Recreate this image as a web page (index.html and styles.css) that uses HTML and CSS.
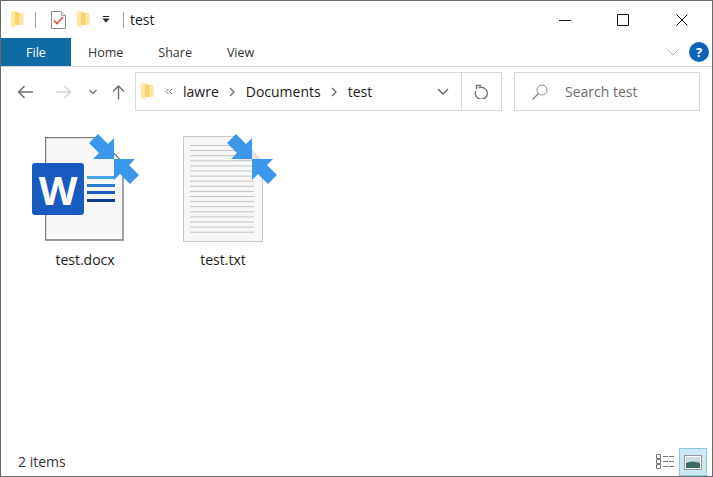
FILE: index.html
```html
<!DOCTYPE html>
<html lang="en">
<head>
<meta charset="utf-8">
<title>test</title>
<link rel="stylesheet" href="styles.css">
</head>
<body>
<svg class="defs" width="0" height="0" aria-hidden="true">
  <defs>
    <symbol id="folder" viewBox="0 0 13 17">
      <path d="M0 0 L6 .5 L7 2 H12.500 V14 H4 L4 16.500 L0 15 Z" fill="#fbe7a6"/>
      <path d="M0 0 L4 .3 V16.500 L0 15 Z" fill="#fde99f"/>
      <path d="M4 1 L8.500 2 V14 H4 Z" fill="#f6d36c"/>
    </symbol>
    <symbol id="compress" viewBox="0 0 50 50">
      <path d="M25 25 H4 L10 19 L0 9 L9 0 L19 10 L25 4 Z" fill="#3b97ea"/>
      <path d="M25 25 H46 L40 31 L50 41 L41 50 L31 40 L25 46 Z" fill="#3b97ea"/>
    </symbol>
  </defs>
</svg>
<div class="window">
  <header class="titlebar">
    <svg class="qa-folder"><use href="#folder"/></svg>
    <span class="qa-sep"></span>
    <svg class="qa-check" viewBox="0 0 15 18">
      <path d="M.5.5 H10.500 L14.500 4.500 V17.500 H.5 Z" fill="#fdfdfd" stroke="#8a8a8a"/>
      <path d="M10.500.5 V4.500 H14.500" fill="#e8e8e8" stroke="#a8a8a8"/>
      <path d="M3 9.500 L6 12.500 L12 6" fill="none" stroke="#e2542c" stroke-width="1.600"/>
    </svg>
    <svg class="qa-folder2"><use href="#folder"/></svg>
    <svg class="qa-more" viewBox="0 0 8 7">
      <path d="M1 .5 H7" stroke="#222" fill="none"/>
      <path d="M.5 2.500 H7.500 L4 6.500 Z" fill="#222"/>
    </svg>
    <span class="qa-sep2"></span>
    <span class="title">test</span>
    <div class="winbtns">
      <svg class="winbtn winbtn-min" viewBox="0 0 12 12"><path d="M0 6.500 H12" stroke="#111" fill="none"/></svg>
      <svg class="winbtn" viewBox="0 0 12 12"><path d="M.5.5 H11.500 V11.500 H.5 Z" stroke="#111" fill="none"/></svg>
      <svg class="winbtn" viewBox="0 0 12 12"><path d="M.5.5 L11.500 11.500 M11.500.5 L.5 11.500" stroke="#111" fill="none"/></svg>
    </div>
  </header>
  <nav class="tabs">
    <span class="tab-file">File</span>
    <span class="tab tab-home">Home</span>
    <span class="tab tab-share">Share</span>
    <span class="tab tab-view">View</span>
    <svg class="ribbon-toggle" viewBox="0 0 14 8"><path d="M1 1 L7 7 L13 1" stroke="#b5b5b5" fill="none"/></svg>
    <span class="help">?</span>
  </nav>
  <div class="navrow">
    <svg class="nav-back" viewBox="0 0 16 14"><path d="M16 7 H1.500 M7.500 1 L1.500 7 L7.500 13" stroke="#6e6e6e" stroke-width="1.500" fill="none"/></svg>
    <svg class="nav-forward" viewBox="0 0 16 14"><path d="M0 7 H14.500 M8.500 1 L14.500 7 L8.500 13" stroke="#d4d4d4" stroke-width="1.500" fill="none"/></svg>
    <svg class="nav-recent" viewBox="0 0 8 6"><path d="M.5 1 L4 4.500 L7.500 1" stroke="#777" stroke-width="1.400" fill="none"/></svg>
    <svg class="nav-up" viewBox="0 0 14 16"><path d="M7 16 V1.500 M1 7.500 L7 1.500 L13 7.500" stroke="#6e6e6e" stroke-width="1.500" fill="none"/></svg>
    <div class="address">
      <svg class="addr-folder"><use href="#folder"/></svg>
      <svg class="addr-chev2" viewBox="0 0 8 7"><path d="M3.500 1 L1 3.500 L3.500 6 M7 1 L4.500 3.500 L7 6" stroke="#777" fill="none"/></svg>
      <span class="crumb crumb-lawre">lawre</span>
      <svg class="addr-chev" viewBox="0 0 6 10"><path d="M1 1 L5 5 L1 9" stroke="#666" stroke-width="1.300" fill="none"/></svg>
      <span class="crumb crumb-docs">Documents</span>
      <svg class="addr-chev" viewBox="0 0 6 10"><path d="M1 1 L5 5 L1 9" stroke="#666" stroke-width="1.300" fill="none"/></svg>
      <span class="crumb crumb-test">test</span>
      <svg class="addr-drop" viewBox="0 0 12 7"><path d="M1 1 L6 6 L11 1" stroke="#666" stroke-width="1.400" fill="none"/></svg>
      <span class="refresh">
        <svg class="refresh-icon" viewBox="0 0 15 15"><path d="M4.500 3.500 A6 6 0 1 1 1.800 6.500 M2.500 .5 V5 M2.500 1 H7" stroke="#777" stroke-width="1.400" fill="none" transform="translate(0 .5)"/></svg>
      </span>
    </div>
    <div class="search">
      <svg class="search-icon" viewBox="0 0 16 16"><circle cx="10" cy="6" r="5" stroke="#8a8a8a" fill="none"/><path d="M6.500 9.500 L.5 15.500" stroke="#8a8a8a" stroke-width="1.200"/></svg>
      <span class="search-text">Search test</span>
    </div>
  </div>
  <main class="files">
    <figure class="file">
      <div class="thumb">
        <svg class="page-doc" viewBox="0 0 79 104">
          <path d="M.5.5 H53 L78 25.500 V103 H.5 Z" fill="#f7f7f8" stroke="#7d7d7d" stroke-width="1.400"/>
        </svg>
        <div class="word">W</div>
        <div class="word-lines"><i class="l1"></i><i class="l2"></i><i class="l3"></i><i class="l4"></i></div>
        <svg class="overlay"><use href="#compress"/></svg>
      </div>
      <figcaption>test.docx</figcaption>
    </figure>
    <figure class="file file-txt">
      <div class="thumb">
        <svg class="page-txt" viewBox="0 0 80 106">
          <path d="M.5.5 H55 L79.500 25 V105.500 H.5 Z" fill="#f7f7f7" stroke="#c9c9c9"/>
          <path d="M55 .5 V25 H79.500 Z" fill="#e2e2e2"/>
          <path d="M7 9.500 H60 M7 14.600 H60 M7 19.700 H60 M7 24.800 H71 M7 29.900 H71 M7 35 H71 M7 40.100 H71 M7 45.200 H71 M7 50.300 H71 M7 55.400 H71 M7 60.500 H71 M7 65.600 H71 M7 70.700 H71 M7 75.800 H71 M7 80.900 H71 M7 86 H71 M7 91.100 H71 M7 96.200 H71" stroke="#c4c4c4" fill="none"/>
        </svg>
        <svg class="overlay"><use href="#compress"/></svg>
      </div>
      <figcaption>test.txt</figcaption>
    </figure>
  </main>
  <footer class="status">
    <span class="count">2 items</span>
    <svg class="view-details" viewBox="0 0 18 16">
      <path d="M.5.5 H4.500 V4.500 H.5 Z M.5 5.500 H4.500 V9.500 H.5 Z M.5 10.500 H4.500 V14.500 H.5 Z" fill="#fff" stroke="#777"/>
      <path d="M7 2.500 H18 M7 7.500 H18 M7 12.500 H18" stroke="#777" stroke-dasharray="5 1"/>
    </svg>
    <span class="view-large">
      <svg class="view-large-icon" viewBox="0 0 18 15">
        <rect x=".5" y=".5" width="17" height="14" fill="#fff" stroke="#999"/>
        <rect x="2" y="2" width="14" height="11" fill="#c9dbe0"/>
        <path d="M2 8 Q8 5 16 8 V13 H2 Z" fill="#3d6b66"/>
      </svg>
    </span>
  </footer>
</div>
</body>
</html>
```
FILE: styles.css
```css
* { box-sizing: border-box; }
html, body { margin: 0; padding: 0; background: #fff; }
.defs { position: absolute; }
body { font-family: "Open Sans", "Noto Sans", "Liberation Sans", sans-serif; color: #1a1a1a; }
.window { width: 713px; height: 477px; border: 1px solid #6a6a6a; display: flex; flex-direction: column; overflow: hidden; }

.titlebar { height: 37px; flex: none; display: flex; align-items: center; }
.qa-folder { width: 13px; height: 17px; margin-left: 10px; }
.qa-sep { width: 1px; height: 16px; background: #a5a5a5; margin-left: 11px; }
.qa-check { width: 15px; height: 18px; margin-left: 15px; }
.qa-folder2 { width: 13px; height: 17px; margin-left: 11px; }
.qa-more { width: 8px; height: 7px; margin-left: 12px; }
.qa-sep2 { width: 1px; height: 16px; background: #a5a5a5; margin-left: 13px; }
.title { font-size: 14px; margin-left: 6px; }
.winbtns { margin-left: auto; display: flex; align-items: center; gap: 47px; margin-right: 24px; }
.winbtn { width: 12px; height: 12px; }
.winbtn-min { margin-right: -1px; }

.tabs { height: 29px; flex: none; border-bottom: 1px solid #dadbdc; display: flex; align-items: center; font-size: 12.5px; }
.tab-file { width: 70px; height: 28px; background: #0f6ba3; color: #fff; display: flex; align-items: center; justify-content: center; }
.tab { color: #333; }
.tab-home { margin-left: 17px; }
.tab-share { margin-left: 35px; }
.tab-view { margin-left: 35px; }
.ribbon-toggle { width: 14px; height: 8px; margin-left: auto; }
.help { width: 20px; height: 20px; border-radius: 50%; background: #0f63b5; color: #fff; font-weight: 700; font-size: 13px; display: flex; align-items: center; justify-content: center; margin: 0 3px 0 9px; }

.navrow { height: 49px; flex: none; display: flex; align-items: center; }
.nav-back { width: 16px; height: 14px; margin-left: 16px; }
.nav-forward { width: 16px; height: 14px; margin-left: 23px; }
.nav-recent { width: 8px; height: 6px; margin-left: 17px; }
.nav-up { width: 13px; height: 16px; margin-left: 15px; }
.address { width: 367px; height: 39px; margin-left: 10px; border: 1px solid #d9d9d9; display: flex; align-items: center; }
.addr-folder { width: 13px; height: 17px; margin-left: 5px; }
.addr-chev2 { width: 8px; height: 7px; margin-left: 11px; }
.crumb { font-size: 14px; }
.crumb-lawre { margin-left: 10px; }
.addr-chev { width: 6px; height: 10px; margin-left: 10px; }
.crumb-docs { margin-left: 11px; }
.crumb-test { margin-left: 11px; }
.addr-drop { width: 12px; height: 7px; margin-left: auto; margin-right: 12px; }
.refresh { width: 40px; height: 100%; border-left: 1px solid #d9d9d9; display: flex; align-items: center; justify-content: center; }
.refresh-icon { width: 15px; height: 15px; }
.search { width: 186px; height: 39px; margin-left: 12px; border: 1px solid #d9d9d9; display: flex; align-items: center; }
.search-icon { width: 16px; height: 16px; margin-left: 17px; }
.search-text { font-size: 14px; color: #6d6d6d; margin-left: 17px; }

.files { flex: 1; display: flex; align-items: flex-start; padding: 18px 0 0 34px; }
.file { margin: 0; width: 100px; display: flex; flex-direction: column; align-items: center; }
.file-txt { margin-left: 38px; }
.thumb { width: 108px; height: 108px; position: relative; flex: none; }
.file figcaption { font-size: 14px; margin-top: 8px; }
.page-doc { position: absolute; left: 14px; top: 3px; width: 79px; height: 104px; }
.word { position: absolute; left: 1px; top: 29px; width: 52px; height: 52px; border-radius: 3px; background: #185abd; color: #fff; font-weight: 700; font-size: 40px; display: flex; align-items: center; justify-content: center; }
.word-lines { position: absolute; left: 56px; top: 42px; width: 28px; display: flex; flex-direction: column; gap: 4.6px; }
.word-lines i { display: block; height: 3px; }
.l1 { background: #41a5ee; }
.l2 { background: #2b7cd3; }
.l3 { background: #185abd; }
.l4 { background: #103f91; }
.overlay { position: absolute; left: 58px; top: 0; width: 50px; height: 50px; }
.page-txt { position: absolute; left: 14px; top: 2px; width: 80px; height: 106px; }

.status { height: 28px; flex: none; display: flex; align-items: center; font-size: 14px; padding-right: 5px; }
.count { margin-left: 17px; margin-bottom: 2px; color: #333; }
.view-details { width: 18px; height: 16px; margin-left: auto; }
.view-large { width: 28px; height: 28px; margin-left: 5px; background: #cce8f5; border: 1px solid #8fc7e0; display: flex; align-items: center; justify-content: center; }
.view-large-icon { width: 18px; height: 15px; }
```
